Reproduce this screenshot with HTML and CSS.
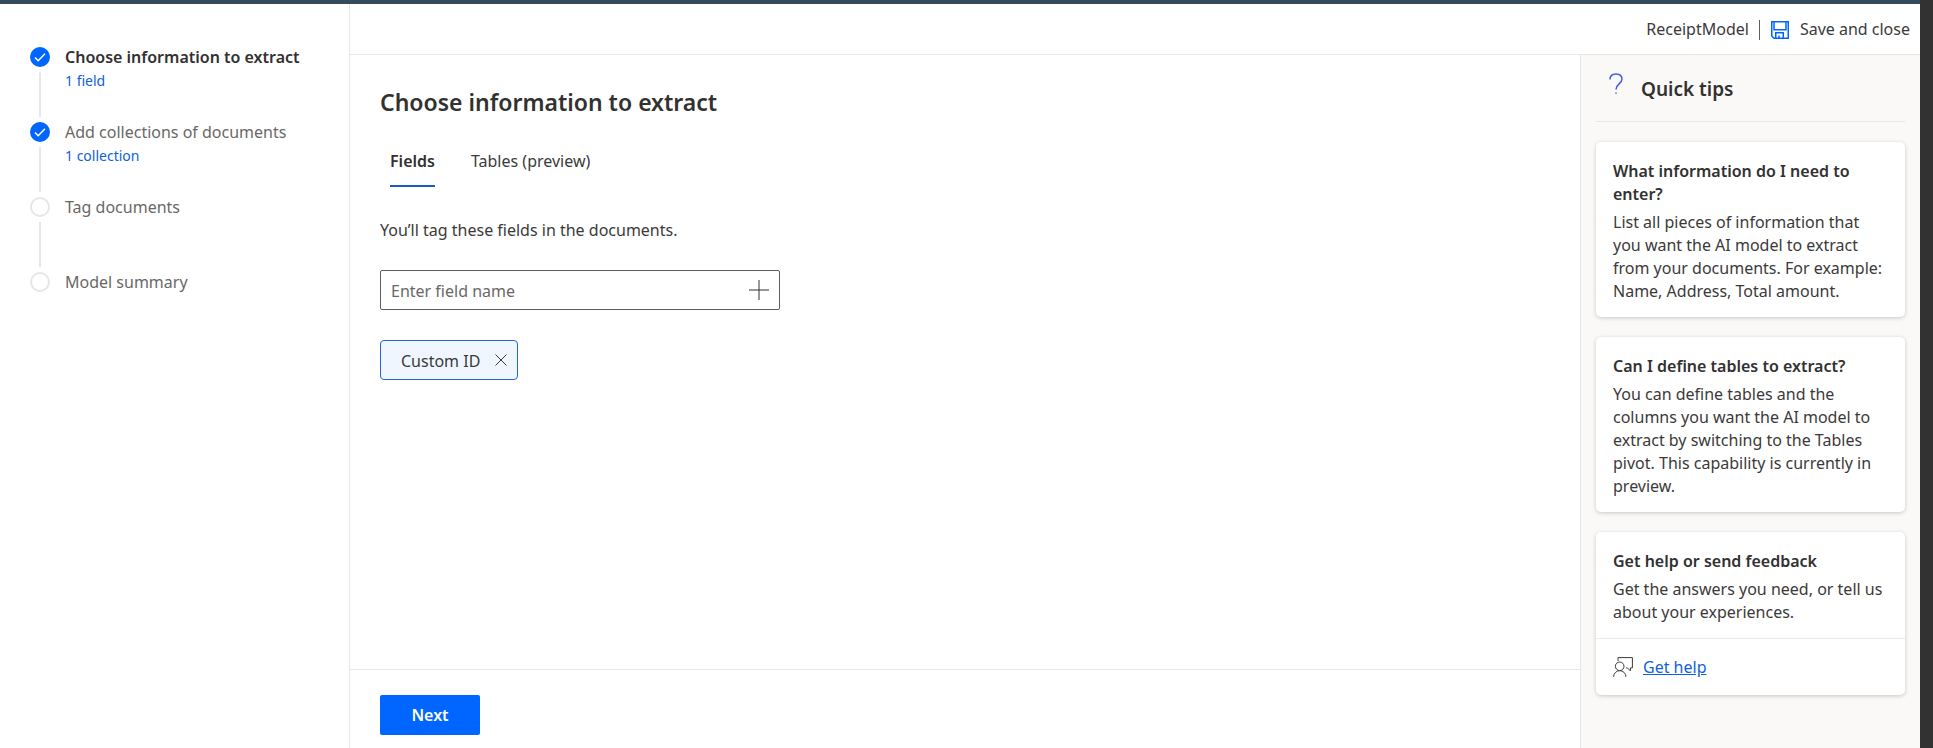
FILE: index.html
```html
<!DOCTYPE html>
<html lang="en">
<head>
<meta charset="utf-8">
<title>ReceiptModel</title>
<meta name="viewport" content="width=device-width, initial-scale=1">
<link rel="stylesheet" href="styles.css">
</head>
<body>
<div class="app">
  <div class="window">
    <div class="brand-bar"></div>
    <div class="layout">
      <nav class="sidebar" aria-label="Steps">
        <ol class="steps">
          <li class="step step-current">
            <span class="marker marker-done"><svg viewBox="0 0 20 20"><path d="M5 10.500l3.200 3.200L15 6.800"/></svg></span>
            <div class="step-text"><span class="step-title">Choose information to extract</span><span class="step-note">1 field</span></div>
          </li>
          <li class="step">
            <span class="marker marker-done"><svg viewBox="0 0 20 20"><path d="M5 10.500l3.200 3.200L15 6.800"/></svg></span>
            <div class="step-text"><span class="step-title">Add collections of documents</span><span class="step-note">1 collection</span></div>
          </li>
          <li class="step">
            <span class="marker"></span>
            <div class="step-text"><span class="step-title">Tag documents</span></div>
          </li>
          <li class="step">
            <span class="marker"></span>
            <div class="step-text"><span class="step-title">Model summary</span></div>
          </li>
        </ol>
      </nav>
      <div class="workspace">
        <header class="toolbar">
          <span class="model-name">ReceiptModel</span>
          <button class="save" type="button">
            <svg class="save-icon" viewBox="0 0 18 18"><path d="M.75.75h16.500v16.500H3L.75 15zM3 .75v8h12v-8M4.750 17.250v-5.500h7.500v5.500M8 17.250V14.500"/></svg>
            <span>Save and close</span>
          </button>
        </header>
        <div class="columns">
          <div class="main-column">
            <main class="content">
              <h1 class="page-title">Choose information to extract</h1>
              <div class="tabs" role="tablist">
                <button class="tab tab-active" type="button" role="tab" aria-selected="true">Fields</button>
                <button class="tab" type="button" role="tab" aria-selected="false">Tables (preview)</button>
              </div>
              <p class="intro">You’ll tag these fields in the documents.</p>
              <div class="field-box">
                <input class="field-input" type="text" placeholder="Enter field name" aria-label="Field name">
                <button class="add" type="button" aria-label="Add field"><svg viewBox="0 0 20 20"><path d="M10 0v20M0 10h20"/></svg></button>
              </div>
              <div class="chip">
                <span>Custom ID</span>
                <button class="remove" type="button" aria-label="Remove Custom ID"><svg viewBox="0 0 12 12"><path d="M.5.5l11 11M11.500.5l-11 11"/></svg></button>
              </div>
            </main>
            <footer class="actions"><button class="next" type="button">Next</button></footer>
          </div>
          <aside class="tips">
            <div class="tips-header">
              <svg class="tips-icon" viewBox="0 0 14 22"><path d="M1 6.500C1 3 3.500 1 7 1s6 2 6 5.300c0 4.200-6 4.700-6 10.200M7 19.500v1.300"/></svg>
              <h2 class="tips-title">Quick tips</h2>
            </div>
            <section class="card">
              <div class="card-body">
                <h3 class="card-title">What information do I need to enter?</h3>
                <p class="card-text">List all pieces of information that you want the AI model to extract from your documents. For example: Name, Address, Total amount.</p>
              </div>
            </section>
            <section class="card">
              <div class="card-body">
                <h3 class="card-title">Can I define tables to extract?</h3>
                <p class="card-text">You can define tables and the columns you want the AI model to extract by switching to the Tables pivot. This capability is currently in preview.</p>
              </div>
            </section>
            <section class="card">
              <div class="card-body">
                <h3 class="card-title">Get help or send feedback</h3>
                <p class="card-text">Get the answers you need, or tell us about your experiences.</p>
              </div>
              <div class="card-footer">
                <svg class="help-icon" viewBox="0 0 20 20"><path d="M5 4V.6h14.400v10.300h-2v3l-3-3h-1.400M.6 19.800a6 6 0 0 1 12.300 0"/><circle cx="6.700" cy="9.300" r="4.300"/></svg>
                <a class="help-link" href="#">Get help</a>
              </div>
            </section>
          </aside>
        </div>
      </div>
    </div>
  </div>
  <div class="edge"></div>
</div>
</body>
</html>
```
FILE: styles.css
```css
* { box-sizing: border-box; }

body {
  margin: 0;
  font-family: "Noto Sans", "Open Sans", sans-serif;
  font-size: 16px;
  line-height: 23px;
  color: #3b3a39;
  background: #fff;
}

button, input { font: inherit; color: inherit; }
button { padding: 0; border: 0; background: none; cursor: pointer; }
h1, h2, h3, p, ol { margin: 0; padding: 0; }
h1, h2, h3 { color: #323130; }
svg { display: block; fill: none; stroke: currentColor; }

.app { display: flex; min-height: 100vh; }
.window { flex: 1; display: flex; flex-direction: column; min-width: 0; }
.edge { width: 13px; background: #323232; }
.brand-bar { height: 4px; background: #334a5f; }
.layout { flex: 1; display: flex; }

.sidebar {
  width: 350px;
  padding: 42px 24px 0 30px;
  border-right: 1px solid #e6e6e6;
}
.steps { list-style: none; }
.step { position: relative; display: flex; gap: 15px; height: 75px; color: #6a6866; }
.step:not(:last-child)::after {
  content: "";
  position: absolute;
  left: 9px;
  top: 26px;
  width: 2px;
  height: 45px;
  background: #e6e6e6;
}
.marker {
  flex: none;
  width: 20px;
  height: 20px;
  margin-top: 1px;
  border: 2px solid #e6e6e6;
  border-radius: 50%;
}
.marker-done { border: 0; background: #0066ff; color: #fff; stroke-width: 1.5; }
.step-text { display: flex; flex-direction: column; }
.step-current .step-title { color: #323130; font-weight: 600; }
.step-note { font-size: 14px; color: #1160d8; }

.workspace { flex: 1; display: flex; flex-direction: column; min-width: 0; }
.toolbar {
  display: flex;
  justify-content: flex-end;
  align-items: center;
  gap: 10px;
  height: 51px;
  padding: 1px 10px 0 0;
  border-bottom: 1px solid #e6e6e6;
}
.save { display: flex; align-items: center; gap: 11px; }
.save::before { content: ""; width: 1px; height: 20px; background: #605e5c; }
.save-icon { width: 18px; height: 18px; color: #0066ff; stroke-width: 1.5; }

.columns { flex: 1; display: flex; }
.main-column { flex: 1; display: flex; flex-direction: column; min-width: 0; }
.content { flex: 1; padding: 29px 30px; }
.page-title { font-size: 23px; line-height: 36px; font-weight: 600; }
.tabs { display: flex; gap: 36px; margin-top: 12px; padding-left: 10px; }
.tab { height: 55px; padding-top: 5px; border-bottom: 2px solid transparent; }
.tab-active { border-color: #185abd; color: #323130; font-weight: 600; }
.intro { margin-top: 32px; }
.field-box {
  display: flex;
  align-items: center;
  width: 400px;
  height: 40px;
  margin-top: 28px;
  padding: 0 10px;
  border: 1px solid #605e5c;
  border-radius: 2px;
}
.field-input { flex: 1; min-width: 0; padding: 3px 0 0; border: 0; outline: 0; background: none; }
.field-input::placeholder { color: #6a6866; opacity: 1; }
.add svg { width: 20px; height: 20px; color: #323130; }
.chip {
  display: inline-flex;
  align-items: center;
  gap: 15px;
  height: 40px;
  margin-top: 30px;
  padding: 0 10px 0 20px;
  border: 1px solid #2266c8;
  border-radius: 4px;
  background: #f0f6ff;
}
.chip span { padding-top: 3px; }
.remove svg { width: 12px; height: 12px; }
.actions { height: 79px; padding: 25px 30px 0; border-top: 1px solid #e6e6e6; }
.next {
  width: 100px;
  height: 40px;
  border-radius: 2px;
  background: #0066ff;
  color: #fff;
  font-weight: 600;
}

.tips {
  display: flex;
  flex-direction: column;
  gap: 20px;
  width: 340px;
  padding: 0 15px;
  border-left: 1px solid #e6e6e6;
  background: #faf9f8;
}
.tips-header {
  display: flex;
  gap: 18px;
  height: 67px;
  padding: 18px 0 0 13px;
  border-bottom: 1px solid #e6e6e6;
}
.tips-icon { width: 14px; height: 22px; color: #3a5fe0; stroke-width: 1.5; }
.tips-title { font-size: 19px; line-height: 32px; font-weight: 600; }
.card { border-radius: 5px; background: #fff; box-shadow: 0 1px 4px rgba(0, 0, 0, .2); }
.card-body { padding: 18px 17px 14px; }
.card-title { font-size: 16px; line-height: 23px; font-weight: 600; }
.card-text { margin-top: 5px; }
.card-footer {
  display: flex;
  align-items: center;
  gap: 10px;
  height: 57px;
  padding: 0 17px;
  border-top: 1px solid #edebe9;
}
.help-icon { width: 20px; height: 20px; }
.help-link { color: #0f62dc; }
```
